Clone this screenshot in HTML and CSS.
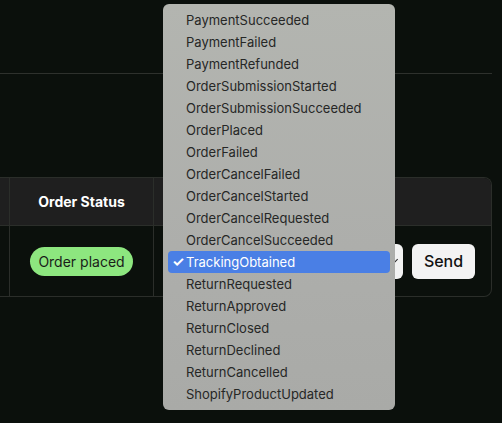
FILE: index.html
```html
<html>
	<head>
        <title>Orders</title>
        <meta name="viewport" content="width=device-width, initial-scale=1.0">
    	<link rel="stylesheet" href="styles.css">
	</head>
	<body>
        <div class="page">
            <div class="topbar"></div>
            <div class="table">
                <div class="row head">
                    <div class="cell c1"></div>
                    <div class="cell c2">Order Status</div>
                    <div class="cell c3"></div>
                </div>
                <div class="row body">
                    <div class="cell c1"></div>
                    <div class="cell c2"><span class="pill">Order placed</span></div>
                    <div class="cell c3">
                        <div class="select"><span class="chev"></span></div>
                        <button class="send">Send</button>
                    </div>
                </div>
            </div>
        </div>
        <div class="menu">
            <div class="item">PaymentSucceeded</div>
            <div class="item">PaymentFailed</div>
            <div class="item">PaymentRefunded</div>
            <div class="item">OrderSubmissionStarted</div>
            <div class="item">OrderSubmissionSucceeded</div>
            <div class="item">OrderPlaced</div>
            <div class="item">OrderFailed</div>
            <div class="item">OrderCancelFailed</div>
            <div class="item">OrderCancelStarted</div>
            <div class="item">OrderCancelRequested</div>
            <div class="item">OrderCancelSucceeded</div>
            <div class="item sel"><span class="check">✓</span>TrackingObtained</div>
            <div class="item">ReturnRequested</div>
            <div class="item">ReturnApproved</div>
            <div class="item">ReturnClosed</div>
            <div class="item">ReturnDeclined</div>
            <div class="item">ReturnCancelled</div>
            <div class="item">ShopifyProductUpdated</div>
        </div>
	</body>
</html>
```

FILE: styles.css
```css
        html, body {
            margin: 0;
            background: #0b100c;
            font-family: Inter, "Liberation Sans", sans-serif;
            cursor: default;
        }
        .page {
            width: 492px;
        }
        .topbar {
            height: 73px;
            border-bottom: 1px solid #2e312d;
        }
        .table {
            margin-top: 103px;
            border: 1px solid #2b2e2a;
            border-left: none;
            border-radius: 0 8px 8px 0;
            overflow: hidden;
        }
        .row {
            display: flex;
        }
        .head {
            height: 47px;
            background: #1f1f1f;
            border-bottom: 1px solid #2b2e2a;
        }
        .body {
            height: 70px;
        }
        .cell {
            display: flex;
            align-items: center;
            border-right: 1px solid #2b2e2a;
        }
        .c1 {
            width: 9px;
        }
        .c2 {
            width: 143px;
            justify-content: center;
            color: #fff;
            font-weight: 700;
            font-size: 14px;
        }
        .c3 {
            flex: 1;
            border-right: none;
            padding-right: 16px;
            justify-content: flex-end;
            gap: 9px;
        }
        .pill {
            background: #8de67f;
            color: #1a1d19;
            font-weight: 400;
            font-size: 14px;
            height: 29px;
            line-height: 29px;
            padding: 0 8px;
            border-radius: 15px;
        }
        .select {
            position: relative;
            width: 230px;
            height: 35px;
            background: #f2f2f2;
            border-radius: 6px;
        }
        .chev {
            position: absolute;
            right: 6px;
            top: 13px;
            width: 4px;
            height: 4px;
            border-right: 1.5px solid #222;
            border-bottom: 1.5px solid #222;
            transform: rotate(45deg);
        }
        .send {
            border: none;
            width: 63px;
            height: 35px;
            background: #f3f3f3;
            border-radius: 6px;
            color: #111;
            font-family: Inter, "Liberation Sans", sans-serif;
            font-size: 16px;
            font-weight: 500;
            padding: 0;
        }
        .menu {
            position: absolute;
            left: 163px;
            top: 4px;
            width: 232px;
            box-sizing: border-box;
            padding: 5px 5px;
            background: linear-gradient(#b3b5b0, #adaeab 60%, #a9aaa7);
            border-radius: 6px;
        }
        .item {
            position: relative;
            height: 22px;
            line-height: 22px;
            padding-left: 18px;
            font-size: 13px;
            color: #262726;
            border-radius: 4px;
        }
        .sel {
            background: #4a7fe5;
            color: #fff;
        }
        .check {
            position: absolute;
            left: 4px;
            font-size: 14px;
            font-weight: 700;
        }
```
